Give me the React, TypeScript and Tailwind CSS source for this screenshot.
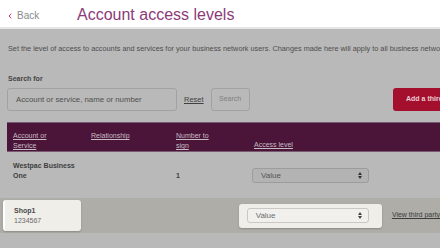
import { ChevronLeft } from "lucide-react";

const font = { fontFamily: '"Liberation Sans", Arial, sans-serif' };

function Select({ light }: { light?: boolean }) {
  return (
    <div
      className={[
        "flex h-[15px] items-center justify-between rounded-[3px] border px-[8px] text-[8px]",
        light
          ? "w-[122px] border-[#c9c8c4] bg-[#f1f0ed] text-[#6d6d6d]"
          : "w-[117px] border-[#9c9c9c] bg-[#b3b3b3] text-[#555]",
      ].join(" ")}
    >
      <span>Value</span>
      <svg width="4" height="7" viewBox="0 0 4 7" className="mr-[-2px]">
        <path d="M0 3L2 0L4 3Z M0 4L2 7L4 4Z" fill={light ? "#444" : "#333"} />
      </svg>
    </div>
  );
}

export default function App() {
  return (
    <div className="h-[248px] w-[440px] overflow-hidden bg-[#b9b9b9]" style={font}>
      <header className="flex h-[27px] items-end bg-white pb-[4px]">
        <div className="ml-[6px] flex w-[71px] items-center text-[10px] text-[#8a8a8a]">
          <ChevronLeft size={8} strokeWidth={3} className="mr-[3px] text-[#d6294f]" />
          Back
        </div>
        <h1 className="text-[16px] leading-none text-[#8b3a78]">Account access levels</h1>
      </header>
      <div className="h-[2px] bg-[#e6e6e6]" />

      <p className="ml-[8px] mt-[16px] whitespace-nowrap text-[7.3px] leading-[8px] text-[#4e4e4e]">
        Set the level of access to accounts and services for your business network users. Changes made
        here will apply to all business network users.
      </p>

      <div className="ml-[8px] mt-[22px] text-[7px] font-bold leading-[8px] text-[#454545]">Search for</div>

      <div className="mt-[5px] flex items-center pl-[7px]">
        <div className="flex h-[23px] w-[170px] items-center rounded-[3px] border border-[#a2a2a2] pl-[8px] text-[7.8px] text-[#505050]">
          Account or service, name or number
        </div>
        <span className="ml-[7px] text-[7.5px] text-[#404040] underline">Reset</span>
        <div className="ml-[7px] flex h-[23px] w-[39px] items-center justify-center rounded-[3px] border border-[#a2a2a2] text-[7px] text-[#808080]">
          Search
        </div>
        <div className="ml-auto flex h-[23px] w-[47px] items-center overflow-hidden whitespace-nowrap rounded-l-[3px] bg-[#a50f2e] pl-[13px] text-[7px] font-bold text-[#e9cdd3]">
          Add a third party
        </div>
      </div>

      <div className="ml-[7px] mt-[11px] flex h-[30px] border-y border-[#7a5a70] bg-[#4a1539] text-[7px] leading-[10px] text-[#c7bcc3] underline">
        <div className="w-[84px] pl-[6px] pt-[8px]">
          Account or
          <br />
          Service
        </div>
        <div className="w-[85px] pt-[8px]">Relationship</div>
        <div className="w-[78px] pt-[8px]">
          Number to
          <br />
          sign
        </div>
        <div className="pt-[17px]">Access level</div>
      </div>

      <div className="flex h-[46px] items-start pl-[13px] pt-[9px] text-[7px] text-[#3e3e3e]">
        <div className="w-[163px] font-bold leading-[10px]">
          Westpac Business
          <br />
          One
        </div>
        <div className="w-[76px] pt-[10px] font-bold leading-[10px]">1</div>
        <div className="pt-[7px]">
          <Select />
        </div>
      </div>

      <div className="flex h-[35px] items-center bg-[#aeada8]">
        <div className="ml-[3px] flex h-[31px] w-[79px] flex-col justify-center rounded-[3px] border-l-[2px] border-white bg-[#efeee9] pl-[9px] text-[7px] leading-[10px] shadow-[0_1px_2px_rgba(0,0,0,0.2)]">
          <span className="font-bold text-[#4a4a4a]">Shop1</span>
          <span className="text-[#6a6a6a]">1234567</span>
        </div>
        <div className="ml-[158px] flex h-[24px] w-[146px] items-center rounded-[3px] bg-[#efeee9] pl-[8px] shadow-[0_1px_2px_rgba(0,0,0,0.2)]">
          <Select light />
        </div>
        <span className="ml-[10px] whitespace-nowrap text-[7px] text-[#3c3c3c] underline">View third party</span>
      </div>
    </div>
  );
}
